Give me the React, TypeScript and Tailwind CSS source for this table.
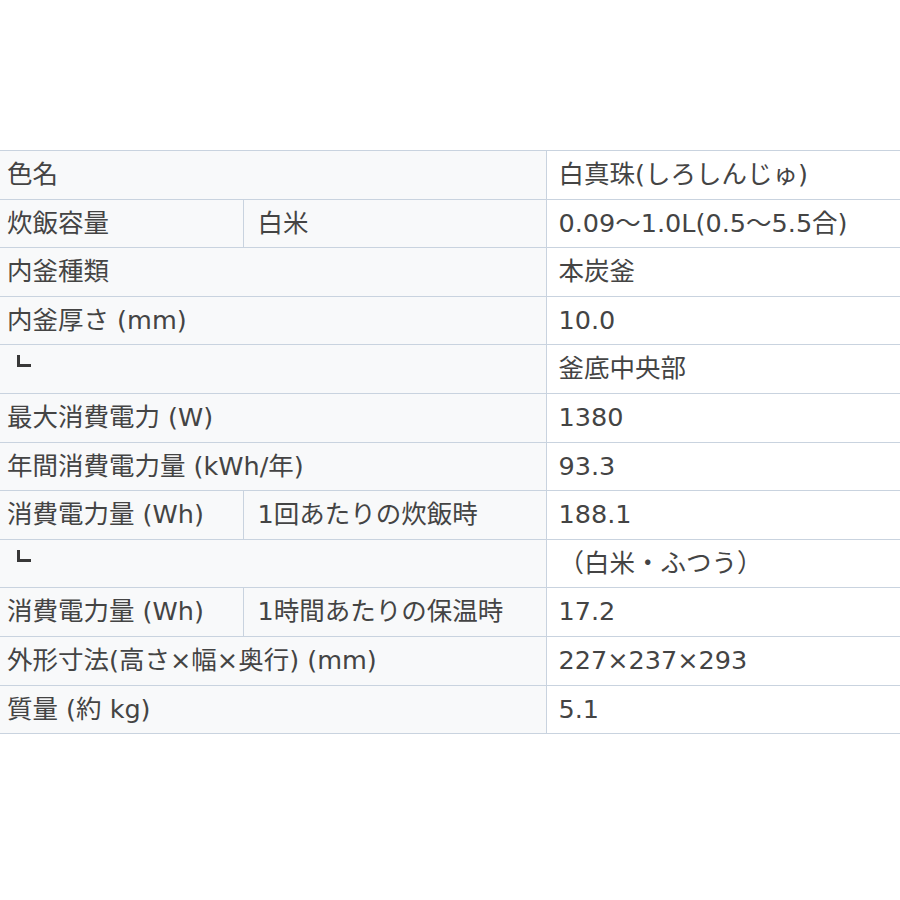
import React from "react";

type Row =
  | { kind: "mark"; value: string }
  | { kind: "span"; label: string; value: string }
  | { kind: "split"; label: string; sub: string; value: string };

const rows: Row[] = [
  { kind: "span", label: "色名", value: "白真珠(しろしんじゅ)" },
  { kind: "split", label: "炊飯容量", sub: "白米", value: "0.09〜1.0L(0.5〜5.5合)" },
  { kind: "span", label: "内釜種類", value: "本炭釜" },
  { kind: "span", label: "内釜厚さ (mm)", value: "10.0" },
  { kind: "mark", value: "釜底中央部" },
  { kind: "span", label: "最大消費電力 (W)", value: "1380" },
  { kind: "span", label: "年間消費電力量 (kWh/年)", value: "93.3" },
  { kind: "split", label: "消費電力量 (Wh)", sub: "1回あたりの炊飯時", value: "188.1" },
  { kind: "mark", value: "（白米・ふつう）" },
  { kind: "split", label: "消費電力量 (Wh)", sub: "1時間あたりの保温時", value: "17.2" },
  { kind: "span", label: "外形寸法(高さ×幅×奥行) (mm)", value: "227×237×293" },
  { kind: "span", label: "質量 (約 kg)", value: "5.1" },
];

const cellL = "border border-[#c9d3df] border-l-0 bg-[#f8f9fa] pl-[7px] align-middle whitespace-nowrap";

export default function App() {
  return (
    <div
      className="w-[900px] h-[900px] bg-white overflow-hidden pt-[150px]"
      style={{ fontFamily: '"DejaVu Sans", "Noto Sans CJK JP", sans-serif' }}
    >
      <table className="border-collapse w-[920px] table-fixed text-[25.5px] text-[#444] leading-none">
        <colgroup>
          <col className="w-[243px]" />
          <col className="w-[303px]" />
          <col />
        </colgroup>
        <tbody>
          {rows.map((r, i) => (
            <tr key={i} className="h-[48.6px]">
              {r.kind === "mark" ? (
                <td colSpan={2} className="border border-[#c9d3df] border-l-0 bg-[#f8f9fa] pl-[17px] pt-[10px] align-top">
                  <span
                    aria-label="L"
                    className="block w-[14px] h-[12px] border-l-[3px] border-b-[3px] border-[#383838]"
                  />
                </td>
              ) : r.kind === "span" ? (
                <td colSpan={2} className={cellL}>
                  {r.label}
                </td>
              ) : (
                <>
                  <td className={cellL}>{r.label}</td>
                  <td className="border border-[#c9d3df] bg-[#f8f9fa] pl-[14px] align-middle whitespace-nowrap">
                    {r.sub}
                  </td>
                </>
              )}
              <td className="border border-[#c9d3df] border-r-0 bg-white pl-[12px] align-middle whitespace-nowrap">
                {r.value}
              </td>
            </tr>
          ))}
        </tbody>
      </table>
    </div>
  );
}
